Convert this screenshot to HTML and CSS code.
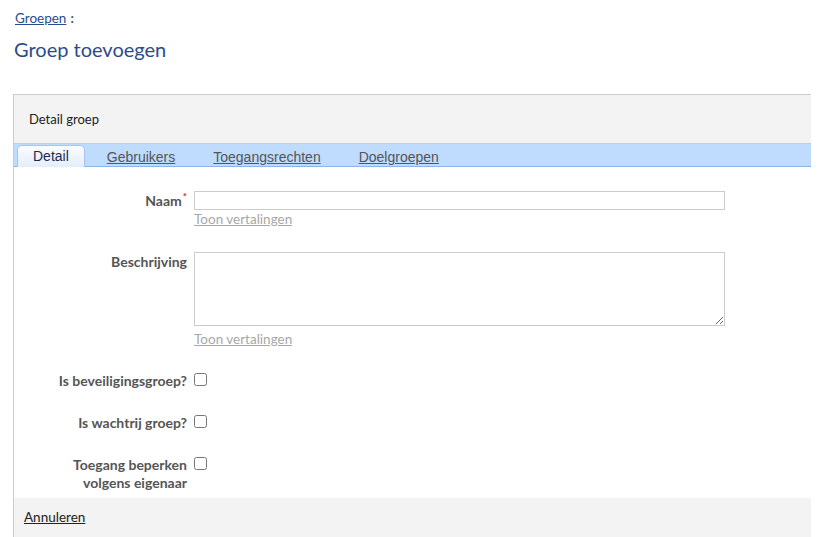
FILE: index.html
```html
<!DOCTYPE html>
<html lang="nl">
<head>
<meta charset="utf-8">
<title>Groep toevoegen</title>
<link rel="stylesheet" href="styles.css">
</head>
<body>
<div class="page">
  <div class="crumbs"><a href="#" class="crumb">Groepen</a><span class="sep">:</span></div>
  <h1 class="title">Groep toevoegen</h1>
  <div class="panel">
    <div class="panel-head">Detail groep</div>
    <div class="tabs">
      <a href="#" class="tab active">Detail</a>
      <a href="#" class="tab">Gebruikers</a>
      <a href="#" class="tab">Toegangsrechten</a>
      <a href="#" class="tab">Doelgroepen</a>
    </div>
    <div class="form">
      <div class="row">
        <label class="lbl">Naam<sup class="req">*</sup></label>
        <div class="field">
          <input type="text" class="input">
          <a href="#" class="trans">Toon vertalingen</a>
        </div>
      </div>
      <div class="row">
        <label class="lbl">Beschrijving</label>
        <div class="field">
          <textarea class="area"></textarea>
          <a href="#" class="trans trans2">Toon vertalingen</a>
        </div>
      </div>
      <div class="row check">
        <label class="lbl">Is beveiligingsgroep?</label>
        <div class="field"><input type="checkbox" class="cb"></div>
      </div>
      <div class="row check">
        <label class="lbl">Is wachtrij groep?</label>
        <div class="field"><input type="checkbox" class="cb"></div>
      </div>
      <div class="row check">
        <label class="lbl">Toegang beperken volgens eigenaar</label>
        <div class="field"><input type="checkbox" class="cb"></div>
      </div>
    </div>
    <div class="panel-foot"><a href="#" class="cancel">Annuleren</a></div>
  </div>
</div>
</body>
</html>
```
FILE: styles.css
```css
html, body {
  margin: 0;
  padding: 0;
  background: #fff;
}
body {
  font-family: Lato, "Open Sans", sans-serif;
  font-size: 13px;
  color: #222;
}
.page {
  padding: 9px 6px 0 13px;
}
.crumbs {
  padding-left: 2px;
  height: 18px;
  line-height: 18px;
  font-size: 13.5px;
}
.crumb {
  color: #2b4c8b;
  text-decoration: underline;
}
.sep {
  color: #555;
  margin-left: 4px;
  font-weight: bold;
}
.title {
  margin: 9px 0 0 1px;
  font-size: 20px;
  font-weight: normal;
  color: #2b4c8b;
  line-height: 26px;
  height: 26px;
}
.panel {
  margin-top: 32px;
  border-top: 1px solid #ccc;
  border-left: 1px solid #ccc;
  width: 797px;
}
.panel-head {
  background: #f2f3f2;
  height: 48px;
  line-height: 48px;
  padding-left: 15px;
  border-bottom: 1px solid #ccc;
  color: #222;
}
.tabs {
  display: flex;
  gap: 4px;
  background: #bfdcff;
  border-bottom: 1px solid #8db4ea;
  height: 22px;
  padding-left: 3px;
  align-items: flex-end;
}
.tab {
  font-family: "Liberation Sans", Arial, sans-serif;
  font-size: 14px;
  color: #555;
  text-decoration: underline;
  padding: 0 16px;
  height: 21px;
  line-height: 22px;
  border: 1px solid transparent;
  border-bottom: 0;
  box-sizing: border-box;
}
.tab.active {
  color: #1a2a55;
  text-decoration: none;
  background: linear-gradient(#fbfcff, #e4eefb);
  border-color: #a7c6ee;
  border-radius: 5px 5px 0 0;
  margin-bottom: -1px;
  margin-right: 1px;
  height: 22px;
  padding: 0 15px;
  line-height: 21px;
}
.form {
  padding: 24px 0 6px 0;
  display: flex;
  flex-direction: column;
  gap: 24px;
}
.row {
  display: flex;
  gap: 7px;
  padding-left: 23px;
}
.lbl {
  width: 150px;
  text-align: right;
  font-weight: bold;
  font-size: 14px;
  color: #555;
  line-height: 19px;
}
.check .lbl {
  line-height: 18px;
}
.req {
  color: #e0103a;
  font-size: 10px;
  line-height: 0;
  vertical-align: 6px;
  margin-left: 1px;
}
.field {
  display: flex;
  flex-direction: column;
  align-items: flex-start;
}
.input {
  width: 531px;
  height: 19px;
  box-sizing: border-box;
  border: 1px solid #ccc;
  margin: 0;
  padding: 1px 4px;
  font: inherit;
}
.area {
  width: 531px;
  height: 74px;
  box-sizing: border-box;
  border: 1px solid #ccc;
  margin: 0;
  padding: 2px 4px;
  font: inherit;
  display: block;
}
.trans {
  color: #a8a8a8;
  text-decoration: underline;
  line-height: 18px;
  font-size: 13.5px;
}
.trans2 {
  margin-top: 4px;
}
.cb {
  width: 13px;
  height: 13px;
  margin: 1px 0 0 0;
}
.panel-foot {
  background: #f2f3f2;
  padding: 10px 10px 12px;
  line-height: 18px;
  font-size: 13.5px;
}
.cancel {
  color: #222;
  text-decoration: underline;
}
```
